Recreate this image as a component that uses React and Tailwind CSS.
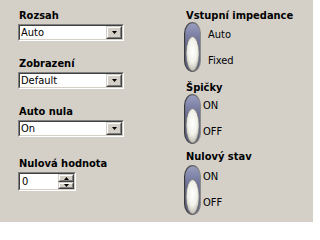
import React from "react";

function Arrow({ up = false }) {
  return (
    <svg width="5" height="3" viewBox="0 0 5 3" className="block">
      {up ? (
        <polygon points="2.5,0 5,3 0,3" fill="#000" />
      ) : (
        <polygon points="0,0 5,0 2.5,3" fill="#000" />
      )}
    </svg>
  );
}

function Raised({ className = "", children }) {
  return (
    <div
      className={
        "border border-t-[#D4D0C8] border-l-[#D4D0C8] border-r-[#404040] border-b-[#404040] " +
        className
      }
    >
      <div className="w-full h-full border border-t-white border-l-white border-r-[#808080] border-b-[#808080] bg-[#D4D0C8] flex items-center justify-center">
        {children}
      </div>
    </div>
  );
}

function Sunken({ className = "", children }) {
  return (
    <div
      className={
        "border border-t-[#808080] border-l-[#808080] border-r-white border-b-white " +
        className
      }
    >
      <div className="w-full h-full border border-t-[#404040] border-l-[#404040] border-r-[#D4D0C8] border-b-[#D4D0C8] bg-white flex items-stretch">
        {children}
      </div>
    </div>
  );
}

function Combo({ value }) {
  return (
    <Sunken className="mt-[2px] w-[106px] h-[17px]">
      <div className="flex-1 pl-[1px] leading-[13px] text-[11px] text-black">{value}</div>
      <Raised className="w-[16px] h-[13px]">
        <Arrow />
      </Raised>
    </Sunken>
  );
}

function Label({ children, className = "" }) {
  return (
    <div className={"h-[13px] leading-[13px] text-[11px] font-bold text-black whitespace-nowrap " + className}>
      {children}
    </div>
  );
}

function Toggle({ id }) {
  return (
    <svg width="17" height="50" viewBox="0 0 17 50" className="block shrink-0">
      <defs>
        <linearGradient id={"rim" + id} x1="0" y1="0" x2="1" y2="0">
          <stop offset="0" stopColor="#3a3a3a" />
          <stop offset="1" stopColor="#8c8c8c" />
        </linearGradient>
        <linearGradient id={"blue" + id} x1="0" y1="0" x2="0" y2="1">
          <stop offset="0" stopColor="#9a9ec0" />
          <stop offset="0.4" stopColor="#6c7096" />
          <stop offset="1" stopColor="#565a80" />
        </linearGradient>
        <radialGradient id={"knob" + id} cx="0.5" cy="0.42" r="0.62">
          <stop offset="0" stopColor="#ffffff" />
          <stop offset="0.55" stopColor="#f1f0ea" />
          <stop offset="1" stopColor="#b3b0a4" />
        </radialGradient>
      </defs>
      <rect x="0.6" y="0.6" width="15.8" height="48.8" rx="7.9" ry="11" fill={"url(#blue" + id + ")"} stroke={"url(#rim" + id + ")"} strokeWidth="1.2" />
      <ellipse cx="8.6" cy="31.8" rx="6.6" ry="17.3" fill={"url(#knob" + id + ")"} stroke="#6a6a6a" strokeWidth="0.7" />
    </svg>
  );
}

export default function App() {
  return (
    <div className="w-[313px] h-[222px] bg-[#D4D0C8] flex font-['DejaVu_Sans_Condensed','DejaVu_Sans',sans-serif] [font-stretch:condensed] text-black overflow-hidden">
      <div className="w-[184px] shrink-0 pl-[18px] pt-[9px] flex flex-col">
        <Label className="pl-[1px]">Rozsah</Label>
        <Combo value="Auto" />
        <Label className="pl-[1px] mt-[16px]">Zobrazení</Label>
        <Combo value="Default" />
        <Label className="pl-[1px] mt-[16px]">Auto nula</Label>
        <Combo value="On" />
        <Label className="pl-[1px] mt-[20px]">Nulová hodnota</Label>
        <Sunken className="mt-[2px] w-[58px] h-[19px]">
          <div className="flex-1 pl-[2px] leading-[15px] text-[11px]">0</div>
          <div className="w-[16px] flex flex-col">
            <Raised className="w-[16px] h-[8px]">
              <Arrow up />
            </Raised>
            <Raised className="w-[16px] h-[7px]">
              <Arrow />
            </Raised>
          </div>
        </Sunken>
      </div>
      <div className="pt-[9px] flex flex-col">
        <Label className="pl-[2px]">Vstupní impedance</Label>
        <div className="flex">
          <Toggle id="a" />
          <div className="ml-[7px] pt-[6px] flex flex-col text-[11px] leading-[13px]">
            <div>Auto</div>
            <div className="mt-[13px]">Fixed</div>
          </div>
        </div>
        <Label className="pl-[2px] mt-[9px]">Špičky</Label>
        <div className="flex">
          <Toggle id="b" />
          <div className="ml-[2px] pt-[5px] flex flex-col text-[11px] leading-[13px]">
            <div>ON</div>
            <div className="mt-[13px]">OFF</div>
          </div>
        </div>
        <Label className="pl-[2px] mt-[6px]">Nulový stav</Label>
        <div className="flex mt-[2px]">
          <Toggle id="c" />
          <div className="ml-[2px] pt-[5px] flex flex-col text-[11px] leading-[13px]">
            <div>ON</div>
            <div className="mt-[13px]">OFF</div>
          </div>
        </div>
      </div>
    </div>
  );
}
